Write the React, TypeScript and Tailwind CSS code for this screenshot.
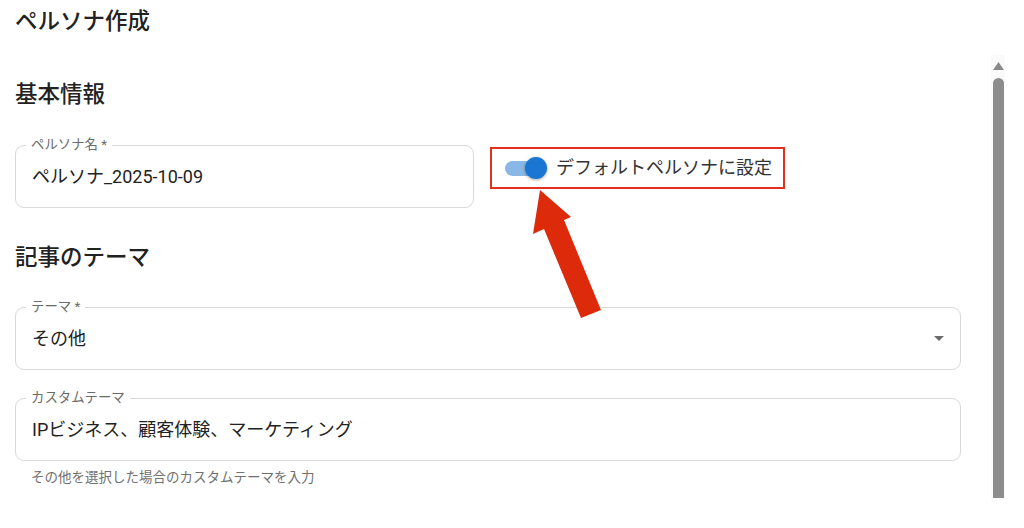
import { ReactNode } from 'react'

interface FieldProps {
  label: string
  children: ReactNode
  className?: string
  select?: boolean
}

const OutlinedField = ({ label, children, className, select }: FieldProps) => {
  return (
    <div
      className={`relative flex h-[63px] items-center rounded-[9px] border border-[#d9d9d9] pl-[16px] pr-[16px] ${className ?? ''}`}
    >
      <span className="absolute -top-[10px] left-[10px] bg-white px-[5px] text-[13.4px] leading-[18px] text-[#6b6b6b]">
        {label}
      </span>
      <span className="flex-1 text-[18px] leading-[24px] text-[#222]">{children}</span>
      {select && (
        <svg width="10" height="5" viewBox="0 0 10 5" className="shrink-0">
          <path d="M0 0 L10 0 L5 5 Z" fill="#6b6b6b" />
        </svg>
      )}
    </div>
  )
}

export default function App() {
  return (
    <div className="relative flex h-[528px] w-[1024px] overflow-hidden bg-white font-[Roboto,'Noto_Sans_CJK_JP',sans-serif]">
      {/* form column */}
      <div className="flex w-[976px] flex-col px-[15px]">
        <h1 className="mt-[5px] text-[22.5px] font-medium leading-[32px] text-[#222]">ペルソナ作成</h1>

        <h2 className="mt-[41px] text-[22.5px] font-medium leading-[32px] text-[#222]">基本情報</h2>

        <div className="mt-[35px] flex items-start gap-[16px]">
          <OutlinedField label="ペルソナ名 *" className="w-[459px]">
            ペルソナ_2025-10-09
          </OutlinedField>

          <div className="mt-[2px] flex h-[42px] w-[295px] items-center gap-[9px] border-2 border-[#e0301e] pl-[11px]">
            <div className="relative flex h-[22px] w-[44px] items-center">
              <div className="ml-[2px] h-[15px] w-[38px] rounded-full bg-[#8ab8e6]" />
              <div className="absolute right-0 h-[22px] w-[22px] rounded-full bg-[#1976d2] shadow-[0_1px_3px_rgba(0,0,0,0.35)]" />
            </div>
            <span className="text-[18px] leading-[24px] text-[#333]">デフォルトペルソナに設定</span>
          </div>
        </div>

        <h2 className="mt-[33px] text-[22.5px] font-medium leading-[32px] text-[#222]">記事のテーマ</h2>

        <OutlinedField label="テーマ *" className="mt-[34px]" select>
          その他
        </OutlinedField>

        <OutlinedField label="カスタムテーマ" className="mt-[28px]">
          IPビジネス、顧客体験、マーケティング
        </OutlinedField>

        <p className="mt-[6px] pl-[16px] text-[13.5px] leading-[20px] text-[#707070]">
          その他を選択した場合のカスタムテーマを入力
        </p>
      </div>

      {/* scrollbar */}
      <div className="w-[48px] pl-[15px] pt-[55px]">
        <div className="flex h-[445px] w-[14px] flex-col items-center bg-[#fafafa]">
          <svg width="11" height="8" viewBox="0 0 11 8" className="mt-[7px]">
            <path d="M0 8 L5.5 0 L11 8 Z" fill="#888" />
          </svg>
          <div className="mt-[8px] h-[420px] w-[11px] rounded-t-full bg-[#8c8c8c]" />
        </div>
      </div>

      {/* annotation arrow */}
      <svg className="pointer-events-none absolute left-0 top-0" width="1024" height="528" viewBox="0 0 1024 528">
        <polygon points="540,190 571,217 564,220 601,310 581,318 544,229 533,234" fill="#dc2a0a" />
      </svg>
    </div>
  )
}
